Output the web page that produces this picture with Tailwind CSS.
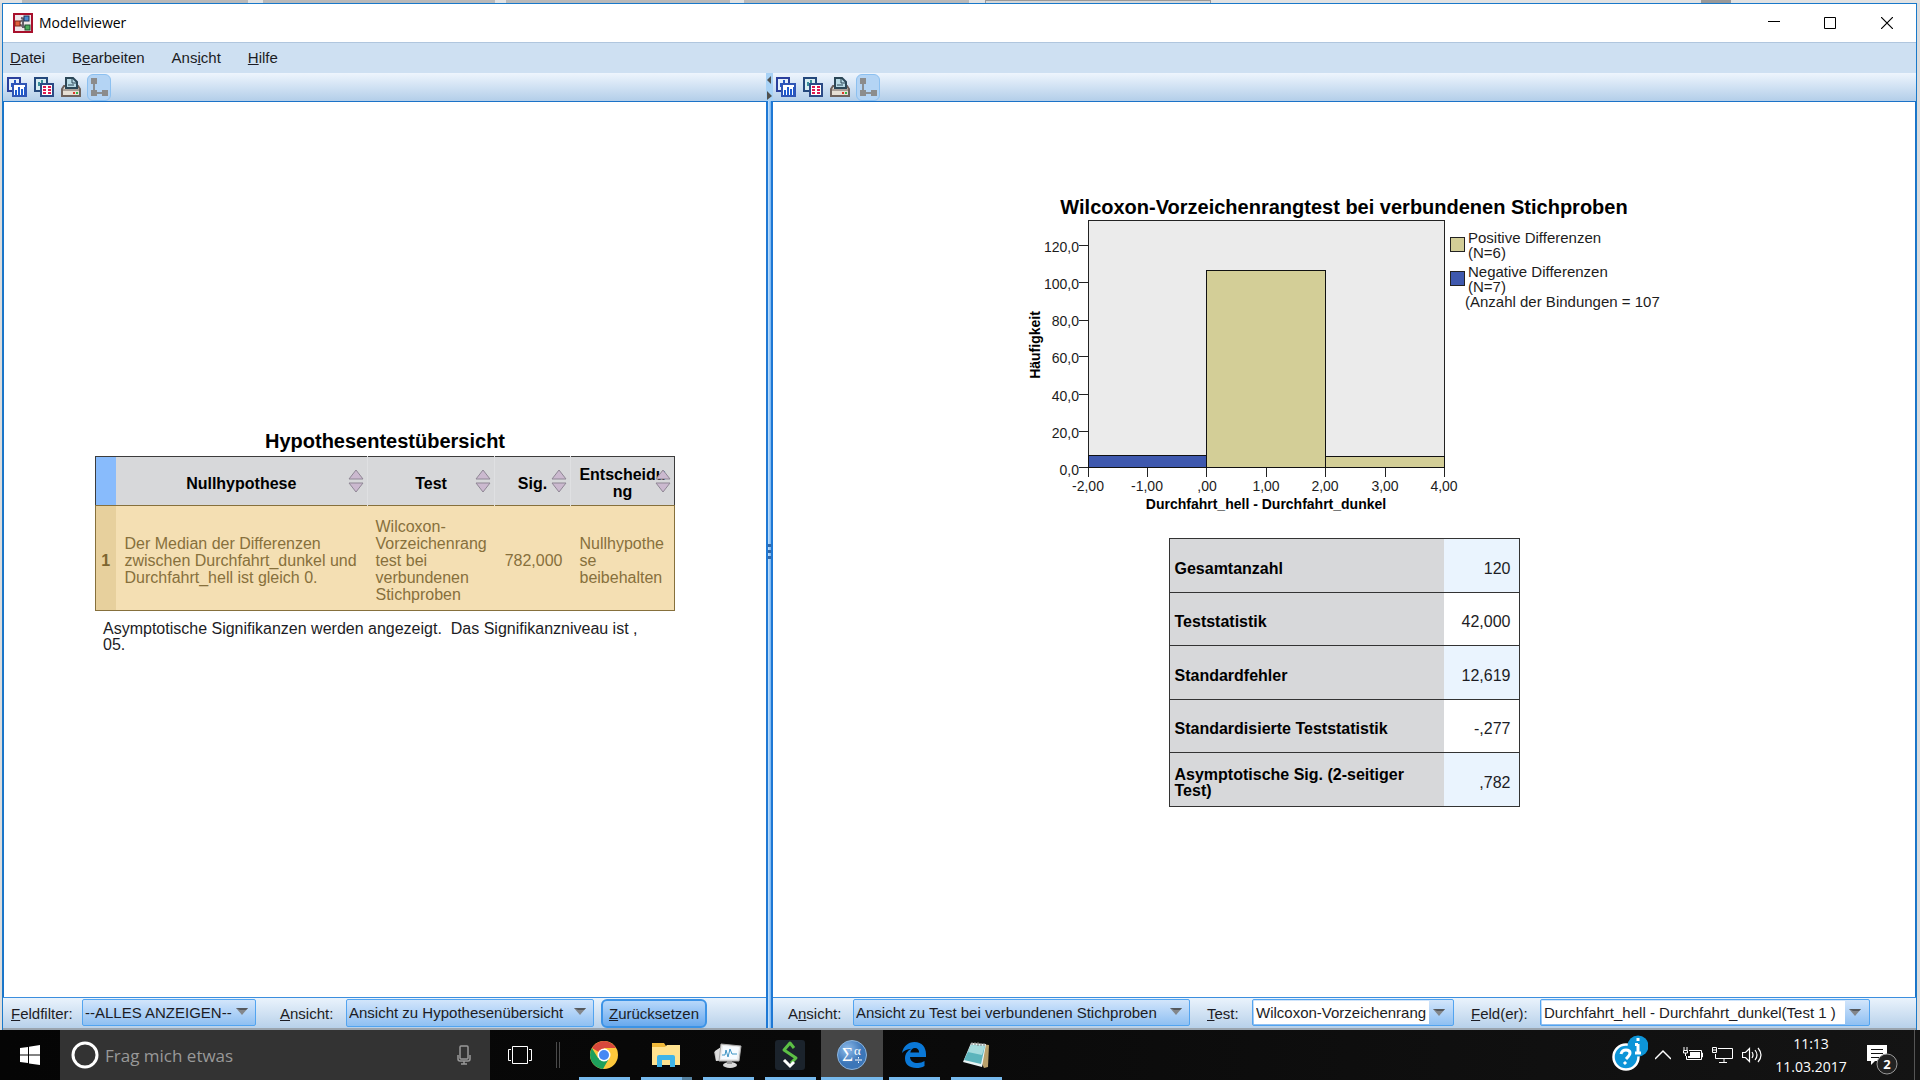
<!DOCTYPE html>
<html lang="de">

<head>
    <meta charset="UTF-8">
    <meta name="viewport" content="width=device-width, initial-scale=1.0">
    <title>Modellviewer</title>
    <script src="https://cdn.jsdelivr.net/npm/@tailwindcss/browser@4"></script>
</head>

<body class="bg-[#dcdcdc] text-[#1c1c24] font-['Liberation_Sans',Arial,sans-serif] overflow-hidden">
    <!-- Shared icons -->
    <svg class="hidden">
        <symbol id="iconCharts" viewBox="0 0 20 20">
            <rect x="1" y="1" width="12" height="13" fill="#e4f0fb" stroke="#2a3f9c" stroke-width="2" />
            <path d="M4 10V6h2v4zM7 8V3h2v5z" fill="#2457c8" />
            <rect x="6" y="7" width="13" height="12" fill="#fff" stroke="#2f55b5" stroke-width="2" />
            <path d="M8 18v-5h2v5zM11 18v-8h2v8zM14 18v-6h2v6zM17 18v-8h1v8z" fill="#1f5bd0" />
        </symbol>
        <symbol id="iconTable" viewBox="0 0 20 20">
            <rect x="1" y="1" width="12" height="13" fill="#d8eef2" stroke="#24487c" stroke-width="2" />
            <path d="M4 9V5h2v4zM7 6V3h2v3z" fill="#3c8f9c" />
            <rect x="7" y="7" width="12" height="12" fill="#fff" stroke="#2c4a86" stroke-width="2" />
            <path d="M9 10h3M14 10h3M9 13h3M14 13h3M9 16h3M14 16h3" stroke="#e01850" stroke-width="2" />
        </symbol>
        <symbol id="iconPrint" viewBox="0 0 20 20">
            <path d="M1 12l2-3h14l2 3v7H1z" fill="#e6dfd4" stroke="#6e625c" stroke-width="2" />
            <path d="M2 13h16" stroke="#6e625c" />
            <path d="M5 11V1h7l4 4v6z" fill="#b9dbe6" stroke="#2c4757" stroke-width="2" />
            <path d="M11 1v5h5M7 8h6" fill="none" stroke="#2c4757" />
            <path d="M12 16h2" stroke="#e03828" stroke-width="2" />
            <path d="M15 16h2" stroke="#35b548" stroke-width="2" />
        </symbol>
        <symbol id="iconTree" viewBox="0 0 20 20">
            <path d="M5 4v12h12" fill="none" stroke="#8a8f94" stroke-width="2" />
            <path d="M2 1h6v6H2zM2 13h6v6H2zM13 13h6v6h-6z" fill="#8c8c8c" />
        </symbol>
        <symbol id="iconSort" viewBox="0 0 16 24">
            <path d="M1 10L8 1l7 9zM1 14h14l-7 9z" fill="#cbb9cf" stroke="#8f8795" />
        </symbol>
        <symbol id="iconDrop" viewBox="0 0 12 7">
            <path d="M0 0h12L6 7z" fill="#83868a" />
            <path d="M0 0h12l-2 2H4z" fill="#55585c" />
        </symbol>
    </svg>

    <div class="flex flex-col h-screen">
        <!-- Tabs of the window behind -->
        <div class="h-[3px] shrink-0 flex bg-[#e2e2e2]">
            <div class="w-[226px] ml-[22px] bg-[#b9b9b9]"></div>
            <div class="w-[232px] ml-[15px] bg-[#b9b9b9]"></div>
            <div class="w-[224px] ml-[11px] bg-[#b9b9b9]"></div>
            <div class="w-[225px] ml-[14px] bg-[#b9b9b9]"></div>
            <div class="w-[226px] ml-[16px] border-t border-x border-[#999] bg-[#d6d6d6]"></div>
            <div class="w-[30px] ml-[490px] bg-[#999]"></div>
        </div>

        <div class="flex-1 min-h-0 flex flex-col ml-[2px] mr-[3px] border border-b-0 border-[#1979ca]">
            <header class="h-[38px] shrink-0 bg-white flex items-center justify-between">
                <div class="flex items-center gap-[6px] pl-[10px] pb-px">
                    <svg class="w-5 h-5" viewBox="0 0 20 20">
                        <rect x="1" y="1" width="18" height="18" fill="#efe6ea" stroke="#a8102c" stroke-width="2" />
                        <path d="M5 10l8-5M5 11l9 4M8 5l5 1M10 7v8" stroke="#66606a" stroke-width="2" />
                        <rect x="2" y="8" width="5" height="5" fill="#e0603c" stroke="#7c2a18" />
                        <rect x="11" y="3" width="5" height="5" fill="#4a8ad0" stroke="#1c3050" />
                        <rect x="12" y="12" width="5" height="5" fill="#4cac5c" stroke="#1f5030" />
                    </svg>
                    <h1 class="text-[14px] text-black font-['Open_Sans',sans-serif]">Modellviewer</h1>
                </div>
                <div class="flex h-full">
                    <button aria-label="Minimieren" class="w-14 flex items-center justify-center">
                        <svg class="w-3 h-3" viewBox="0 0 12 12"><path d="M0 4.500h12" stroke="#000" /></svg>
                    </button>
                    <button aria-label="Maximieren" class="w-14 flex items-center justify-center pb-px">
                        <svg class="w-3 h-3" viewBox="0 0 12 12"><path d="M.5.5h11v11H.5z" fill="none" stroke="#000" /></svg>
                    </button>
                    <button aria-label="Schließen" class="w-[58px] flex items-center justify-center pb-px">
                        <svg class="w-3 h-3" viewBox="0 0 12 12"><path d="M0 0l12 12M12 0L0 12" stroke="#000" stroke-width="1.2" /></svg>
                    </button>
                </div>
            </header>

            <nav class="h-[31px] shrink-0 bg-[#cee0f2] border-t border-[#b0c6de] flex items-center gap-[27px] pl-[7px] text-[15px]">
                <button><u>D</u>atei</button>
                <button>B<u>e</u>arbeiten</button>
                <button>Ans<u>i</u>cht</button>
                <button><u>H</u>ilfe</button>
            </nav>

            <div class="flex-1 min-h-0 flex">
                <!-- Hypothesenübersicht -->
                <section class="w-[763px] shrink-0 flex flex-col">
                    <div class="h-7 shrink-0 flex items-center gap-[7px] pl-1 bg-linear-to-b from-[#eef5fd] to-[#b3cee9]">
                        <button aria-label="Diagramme" class="w-5 h-5"><svg class="w-5 h-5"><use href="#iconCharts" /></svg></button>
                        <button aria-label="Tabelle" class="w-5 h-5"><svg class="w-5 h-5"><use href="#iconTable" /></svg></button>
                        <button aria-label="Drucken" class="w-5 h-5"><svg class="w-5 h-5"><use href="#iconPrint" /></svg></button>
                        <button aria-label="Baum" class="-ml-px w-6 h-[27px] flex items-center justify-center rounded-md border border-[#8cc0f0] bg-[#b4d4f4]"><svg class="w-5 h-5"><use href="#iconTree" /></svg></button>
                    </div>

                    <div class="flex-1 bg-white border-t border-l border-[#1b72c8] flex flex-col items-center pt-[324px]">
                        <h2 class="text-[20px] leading-[30px] font-bold text-black">Hypothesentestübersicht</h2>
                        <table class="w-[580px] table-fixed border-collapse border border-[#3c3c3c] text-[16px] leading-[17px]">
                            <colgroup>
                                <col class="w-[20px]">
                                <col class="w-[252px]">
                                <col class="w-[127px]">
                                <col class="w-[76px]">
                                <col>
                            </colgroup>
                            <thead>
                                <tr class="h-[49px] bg-[#d7d8da] text-black">
                                    <th class="bg-[#88bbfc]"></th>
                                    <th class="relative pt-1">Nullhypothese<svg class="absolute right-[3px] top-3 w-4 h-6"><use href="#iconSort" /></svg></th>
                                    <th class="relative pt-1 border-l border-[#dfe0e2]">Test<svg class="absolute right-[3px] top-3 w-4 h-6"><use href="#iconSort" /></svg></th>
                                    <th class="relative pt-1 border-l border-[#dfe0e2]">Sig.<svg class="absolute right-[3px] top-3 w-4 h-6"><use href="#iconSort" /></svg></th>
                                    <th class="relative pt-1 border-l border-[#dfe0e2]">Entscheidu<br>ng<svg class="absolute right-[3px] top-3 w-4 h-6"><use href="#iconSort" /></svg></th>
                                </tr>
                            </thead>
                            <tbody>
                                <tr class="h-[105px] bg-[#f4dfb3] text-[#87703c] border border-[#86703c]">
                                    <th class="bg-[#e7d09d] text-[#7d6530] pt-1">1</th>
                                    <td class="pl-[9px] pt-1">Der Median der Differenzen<br>zwischen Durchfahrt_dunkel und<br>Durchfahrt_hell ist gleich 0.</td>
                                    <td class="pl-2 pt-1">Wilcoxon-<br>Vorzeichenrang<br>test bei<br>verbundenen<br>Stichproben</td>
                                    <td class="pr-2 pt-1 text-right">782,000</td>
                                    <td class="pl-[9px] pt-1">Nullhypothe<br>se<br>beibehalten</td>
                                </tr>
                            </tbody>
                        </table>
                        <p class="w-[564px] mt-[10px] text-[16px] leading-[16px]">Asymptotische Signifikanzen werden angezeigt.&nbsp; Das Signifikanzniveau ist ,<br>05.</p>
                    </div>

                    <div class="h-[31px] shrink-0 flex items-start pt-px pl-2 text-[15px] border-t border-[#3b8ede] bg-linear-to-b from-[#eaf3fc] to-[#b8d1ea]">
                        <label for="feldfilter" class="leading-[30px] w-[71px]"><u>F</u>eldfilter:</label>
                        <div class="relative w-[174px]">
                            <select id="feldfilter" class="appearance-none w-full h-[27px] pl-[2px] pt-px border border-[#52a4f0] rounded-xs bg-linear-to-b from-[#d2e5fb] to-[#8fc0f2]"><option>--ALLES ANZEIGEN--</option></select>
                            <svg class="absolute right-2 top-[9px] w-3 h-[7px] pointer-events-none"><use href="#iconDrop" /></svg>
                        </div>
                        <label for="ansichtLinks" class="leading-[30px] ml-6 w-[66px]"><u>A</u>nsicht:</label>
                        <div class="relative w-[248px]">
                            <select id="ansichtLinks" class="appearance-none w-full h-[28px] pl-[2px] pt-px border border-[#52a4f0] rounded-xs bg-linear-to-b from-[#d2e5fb] to-[#8fc0f2]"><option>Ansicht zu Hypothesenübersicht</option></select>
                            <svg class="absolute right-2 top-[9px] w-3 h-[7px] pointer-events-none"><use href="#iconDrop" /></svg>
                        </div>
                        <button class="ml-[7px] w-[106px] h-[29px] pt-px rounded-md border-2 border-[#3c93e6] bg-linear-to-b from-[#b8d8fa] to-[#68a9ee]"><u>Z</u>urücksetzen</button>
                    </div>
                </section>

                <!-- Teiler -->
                <div class="w-[7px] shrink-0 flex flex-col">
                    <div class="h-7 bg-[#a8d2f6]">
                        <svg class="w-[6px] h-7" viewBox="0 0 6 28"><path d="M5 3v8L1 7zM1 18l5 5-5 4z" fill="#50504e" /></svg>
                    </div>
                    <div class="flex-1 flex items-center pb-7 border-x-2 border-[#1e78d4] bg-linear-to-r from-[#c8e4fc] to-[#74b2f0]">
                        <svg class="w-[3px] h-5" viewBox="0 0 3 20"><path d="M0 3h3v3H0zM0 9h3v3H0zM0 15h3v3H0z" fill="#3468a8" /></svg>
                    </div>
                </div>

                <!-- Testansicht -->
                <section class="flex-1 min-w-0 flex flex-col">
                    <div class="h-7 shrink-0 flex items-center gap-[7px] pl-[3px] bg-linear-to-b from-[#eef5fd] to-[#b3cee9]">
                        <button aria-label="Diagramme" class="w-5 h-5"><svg class="w-5 h-5"><use href="#iconCharts" /></svg></button>
                        <button aria-label="Tabelle" class="w-5 h-5"><svg class="w-5 h-5"><use href="#iconTable" /></svg></button>
                        <button aria-label="Drucken" class="w-5 h-5"><svg class="w-5 h-5"><use href="#iconPrint" /></svg></button>
                        <button aria-label="Baum" class="-ml-px w-6 h-[27px] flex items-center justify-center rounded-md border border-[#8cc0f0] bg-[#b4d4f4]"><svg class="w-5 h-5"><use href="#iconTree" /></svg></button>
                    </div>

                    <div class="flex-1 bg-white border-t border-r border-[#1b72c8] flex flex-col items-center pt-[92px]">
                        <h2 class="text-[20px] leading-[26px] font-bold text-black">Wilcoxon-Vorzeichenrangtest bei verbundenen Stichproben</h2>
                        <svg class="w-[640px] h-[300px]" viewBox="0 0 640 300" font-size="14" fill="#1c1c1c">
                            <rect x="64.5" y=".5" width="356" height="247" fill="#ebebeb" stroke="#222" />
                            <rect x="64.5" y="235.5" width="118" height="12" fill="#3e58ae" stroke="#111" />
                            <rect x="182.5" y="50.5" width="119" height="197" fill="#d3ce97" stroke="#111" />
                            <rect x="301.5" y="236.5" width="119" height="11" fill="#d3ce97" stroke="#111" />
                            <path d="M55 25.5h9M55 62.5h9M55 100.5h9M55 136.5h9M55 174.5h9M55 211.5h9M55 247.5h9M64.5 248v9M123.5 248v9M182.5 248v9M242.5 248v9M301.5 248v9M361.5 248v9M420.5 248v9" stroke="#222" />
                            <g text-anchor="end">
                                <text x="55" y="32">120,0</text>
                                <text x="55" y="69">100,0</text>
                                <text x="55" y="106">80,0</text>
                                <text x="55" y="143">60,0</text>
                                <text x="55" y="181">40,0</text>
                                <text x="55" y="218">20,0</text>
                                <text x="55" y="255">0,0</text>
                            </g>
                            <g text-anchor="middle">
                                <text x="64" y="271">-2,00</text>
                                <text x="123" y="271">-1,00</text>
                                <text x="183" y="271">,00</text>
                                <text x="242" y="271">1,00</text>
                                <text x="301" y="271">2,00</text>
                                <text x="361" y="271">3,00</text>
                                <text x="420" y="271">4,00</text>
                                <g font-weight="bold" fill="#000">
                                    <text x="242" y="289">Durchfahrt_hell - Durchfahrt_dunkel</text>
                                    <text transform="translate(16 125) rotate(-90)">Häufigkeit</text>
                                </g>
                            </g>
                            <rect x="426.5" y="17.5" width="14" height="14" fill="#d3ce97" stroke="#222" />
                            <rect x="426.5" y="51.5" width="14" height="14" fill="#3e58ae" stroke="#222" />
                            <g font-size="15">
                                <text x="444" y="23">Positive Differenzen</text>
                                <text x="444" y="38">(N=6)</text>
                                <text x="444" y="57">Negative Differenzen</text>
                                <text x="444" y="72">(N=7)</text>
                                <text x="441" y="87">(Anzahl der Bindungen = 107</text>
                            </g>
                        </svg>

                        <table class="w-[351px] mt-[18px] table-fixed border-collapse border border-[#333] text-[16px] leading-[16px]">
                            <colgroup>
                                <col>
                                <col class="w-[75px]">
                            </colgroup>
                            <tbody>
                                <tr class="h-[54px] border border-[#333]">
                                    <th class="pl-[5px] pt-[6px] text-left bg-[#d7d8da] text-black">Gesamtanzahl</th>
                                    <td class="pr-2 pt-[6px] text-right bg-[#eaf4fe]">120</td>
                                </tr>
                                <tr class="h-[53px] border border-[#333]">
                                    <th class="pl-[5px] pt-[6px] text-left bg-[#d7d8da] text-black">Teststatistik</th>
                                    <td class="pr-2 pt-[6px] text-right">42,000</td>
                                </tr>
                                <tr class="h-[54px] border border-[#333]">
                                    <th class="pl-[5px] pt-[6px] text-left bg-[#d7d8da] text-black">Standardfehler</th>
                                    <td class="pr-2 pt-[6px] text-right bg-[#eaf4fe]">12,619</td>
                                </tr>
                                <tr class="h-[53px] border border-[#333]">
                                    <th class="pl-[5px] pt-[6px] text-left bg-[#d7d8da] text-black">Standardisierte Teststatistik</th>
                                    <td class="pr-2 pt-[6px] text-right">-,277</td>
                                </tr>
                                <tr class="h-[54px] border border-[#333]">
                                    <th class="pl-[5px] pt-[6px] text-left bg-[#d7d8da] text-black">Asymptotische Sig. (2-seitiger<br>Test)</th>
                                    <td class="pr-2 pt-[6px] text-right bg-[#eaf4fe]">,782</td>
                                </tr>
                            </tbody>
                        </table>
                    </div>

                    <div class="h-[31px] shrink-0 flex items-start pt-px pl-[15px] text-[15px] border-t border-[#3b8ede] bg-linear-to-b from-[#eaf3fc] to-[#b8d1ea]">
                        <label for="ansichtRechts" class="leading-[30px] w-[65px]">A<u>n</u>sicht:</label>
                        <div class="relative w-[337px]">
                            <select id="ansichtRechts" class="appearance-none w-full h-[27px] pl-[2px] pt-px border border-[#52a4f0] rounded-xs bg-linear-to-b from-[#d2e5fb] to-[#8fc0f2]"><option>Ansicht zu Test bei verbundenen Stichproben</option></select>
                            <svg class="absolute right-2 top-[9px] w-3 h-[7px] pointer-events-none"><use href="#iconDrop" /></svg>
                        </div>
                        <label for="test" class="leading-[30px] ml-[17px] w-[45px]"><u>T</u>est:</label>
                        <div class="relative w-[202px] flex h-[27px] p-px border border-[#52a4f0] rounded-xs bg-linear-to-b from-[#d2e5fb] to-[#8fc0f2]">
                            <select id="test" class="appearance-none w-[175px] h-[23px] pl-[2px] pt-px bg-white"><option>Wilcoxon-Vorzeichenrang</option></select>
                            <svg class="absolute right-2 top-[9px] w-3 h-[7px] pointer-events-none"><use href="#iconDrop" /></svg>
                        </div>
                        <label for="felder" class="leading-[30px] ml-[17px] w-[69px]"><u>F</u>eld(er):</label>
                        <div class="relative w-[330px] flex h-[27px] p-px border border-[#52a4f0] rounded-xs bg-linear-to-b from-[#d2e5fb] to-[#8fc0f2]">
                            <select id="felder" class="appearance-none w-[303px] h-[23px] pl-[2px] pt-px bg-white"><option>Durchfahrt_hell - Durchfahrt_dunkel(Test 1 )</option></select>
                            <svg class="absolute right-2 top-[9px] w-3 h-[7px] pointer-events-none"><use href="#iconDrop" /></svg>
                        </div>
                    </div>
                </section>
            </div>
            <div class="h-[2px] shrink-0 bg-[#9aa4ae]"></div>
        </div>

        <!-- Taskleiste -->
        <footer class="h-[50px] shrink-0 flex bg-linear-to-r from-[#050505] via-[#0a0a0a] to-[#141414] text-white font-['Open_Sans',sans-serif]">
            <button aria-label="Start" class="w-[60px] flex items-center justify-center">
                <svg class="w-5 h-5" viewBox="0 0 20 20"><path d="M0 3l8-1v7.500H0zM9 1.800L20 0v9.500H9zM0 10.500h8V18l-8-1zM9 10.500h11V20L9 18.400z" fill="#fff" /></svg>
            </button>
            <div class="w-[430px] flex items-center bg-[#333] pl-[11px] pr-[19px]">
                <svg class="w-7 h-7 shrink-0" viewBox="0 0 28 28"><circle cx="14" cy="14" r="12" fill="none" stroke="#fff" stroke-width="3" /></svg>
                <input type="text" aria-label="Suche" placeholder="Frag mich etwas" class="flex-1 min-w-0 ml-[6px] pt-[2px] text-[17px] bg-transparent placeholder-[#999]">
                <svg class="w-[14px] h-5" viewBox="0 0 14 20" fill="none" stroke="#999" stroke-width="1.500"><rect x="3" y="1" width="8" height="13" rx="1" /><path d="M1 10v4q0 2 2 2h8q2 0 2-2v-4M7 16v3M4 19h6" /></svg>
            </div>
            <button aria-label="Taskansicht" class="w-[60px] flex items-center justify-center">
                <svg class="w-6 h-[18px]" viewBox="0 0 24 18" fill="none" stroke="#fff"><path d="M4.500.5h15v17h-15zM3 3.500H.5v11H3M21 3.500h2.500v11H21" /></svg>
            </button>
            <div class="w-[4px] h-[26px] ml-[6px] mr-[13px] mt-3 border-x border-[#4a4a4a]"></div>

            <button aria-label="Chrome" class="w-[62px] flex flex-col items-center justify-between">
                <svg class="w-7 h-7 mt-[11px]" viewBox="0 0 28 28">
                    <circle cx="14" cy="14" r="14" fill="#fdc83c" />
                    <path d="M14 14L1.900 7A14 14 0 0 1 26.100 7H14z" fill="#d8483c" />
                    <path d="M1.900 7A14 14 0 0 0 13 28l6-10.500L8 17z" fill="#1ea05c" />
                    <circle cx="14" cy="14" r="6.500" fill="#fff" />
                    <circle cx="14" cy="14" r="5" fill="#4688f4" />
                </svg>
                <span class="w-[51px] h-[3px] bg-[#76b9ed]"></span>
            </button>
            <button aria-label="Explorer" class="w-[62px] flex flex-col items-center justify-between">
                <svg class="w-7 h-6 mt-[13px]" viewBox="0 0 28 24">
                    <path d="M0 0h12l2 3h14v19H0z" fill="#f0b93a" />
                    <path d="M0 4h13l2-2h13v20H0z" fill="#ffe28f" />
                    <path d="M5 24V14q0-2 2-2h14q2 0 2 2v10h-5v-7h-8v7z" fill="#3fb4e8" />
                </svg>
                <span class="flex w-[51px] h-[3px]"><i class="w-[41px] bg-[#76b9ed]"></i><i class="w-[10px] bg-[#54809f]"></i></span>
            </button>
            <button aria-label="Leistungsmonitor" class="w-[62px] flex flex-col items-center justify-between">
                <svg class="w-7 h-[25px] mt-[13px]" viewBox="0 0 28 25">
                    <path d="M0 9l8-5v14H2z" fill="#a9a9a9" />
                    <path d="M1 8l6-4 1 12-6 2z" fill="#ddd" />
                    <path d="M7 1l20 2-2 15H5z" fill="#e9e9e9" stroke="#aaa" />
                    <path d="M9 3l16 1-2 12H7z" fill="#f6fbff" />
                    <path d="M8 12h3l1-5 2 7 2-8 2 5h5" fill="none" stroke="#3d94c4" />
                    <ellipse cx="16" cy="22" rx="7" ry="3" fill="#dadada" />
                    <path d="M13 18h5v3h-5z" fill="#999" />
                </svg>
                <span class="w-[51px] h-[3px] bg-[#76b9ed]"></span>
            </button>
            <button aria-label="Aufgaben" class="w-[62px] flex flex-col items-center justify-between">
                <svg class="w-[30px] h-[30px] mt-[10px]" viewBox="0 0 30 30" fill="none" stroke-width="3">
                    <rect width="30" height="30" rx="3" fill="#1b232c" />
                    <path d="M19 8l-4-5-6 7 12 8-5 5" stroke="#5cc045" stroke-linejoin="round" />
                    <path d="M9 20l6 6 4-4" stroke="#fff" />
                </svg>
                <span class="w-[51px] h-[3px] bg-[#76b9ed]"></span>
            </button>
            <button aria-label="SPSS Statistics" class="w-[62px] flex flex-col items-center justify-between bg-[#454545]">
                <svg class="w-[30px] h-[30px] mt-[10px]" viewBox="0 0 30 30">
                    <defs><radialGradient id="spss" cx=".35" cy=".3"><stop offset="0" stop-color="#8fbcea" /><stop offset="1" stop-color="#3c76b8" /></radialGradient></defs>
                    <circle cx="15" cy="15" r="14.500" fill="url(#spss)" stroke="#8cb4dc" />
                    <g fill="#fff" font-family="Liberation Serif, serif"><text x="5" y="21" font-size="19">Σ</text><text x="17" y="15" font-size="13">α</text></g>
                    <path d="M18 20h7M21.500 17v1.500M21.500 21.500V23" stroke="#fff" />
                </svg>
                <span class="w-full h-[3px] bg-[#76b9ed]"></span>
            </button>
            <button aria-label="Edge" class="w-[62px] flex flex-col items-center justify-between">
                <svg class="w-6 h-[26px] mt-3" viewBox="0 0 24 26"><path d="M0 11C1.500 4 6 0 12.500 0 20 0 24 5.500 24 12v3H8c.3 4 3.500 6 7.500 6 2.800 0 5-.7 7-2v5c-2.300 1.400-5 2-8 2C7.500 26 3 22.500 3 16.500 3 12 5.500 8.500 9.500 6.800 5.500 7 2 8.500 0 11zM8.300 10.500h8.800C17 7.500 15.500 6 13 6 10.500 6 8.800 8 8.300 10.500z" fill="#0a78d7" /></svg>
                <span class="w-[51px] h-[3px] bg-[#76b9ed]"></span>
            </button>
            <button aria-label="Editor" class="w-[62px] flex flex-col items-center justify-between">
                <svg class="w-7 h-7 mt-[11px]" viewBox="0 0 28 28">
                    <path d="M10 2l17 2-1 22-4 1z" fill="#b9a06a" />
                    <path d="M9 2l15 1-4 23L1 21z" fill="#e9f4f4" />
                    <path d="M9 4l14 1-4 18L2 19z" fill="#5cb4bc" />
                    <path d="M9 4l14 1-3 9L6 11z" fill="#a5dbdd" />
                    <path d="M10 1v3M13 1v3M16 1v4M19 2v3M22 2v3" stroke="#777" />
                </svg>
                <span class="w-[51px] h-[3px] bg-[#76b9ed]"></span>
            </button>

            <!-- Infobereich -->
            <div class="ml-auto flex items-center">
                <svg class="w-9 h-9 mb-1" viewBox="0 0 36 36">
                    <circle cx="14" cy="22" r="12.500" fill="#0d95d8" stroke="#fff" stroke-width="2.500" />
                    <circle cx="26" cy="11" r="10.500" fill="#0d95d8" />
                    <g fill="none" stroke="#fff" stroke-width="3"><path d="M9 19q1-4 5-4t4 3q0 2-4 6M12 27l2 2M26 9v10M26 3v3M23 9.500h3M23 18h6" /></g>
                </svg>
                <svg class="w-4 h-4 ml-[7px]" viewBox="0 0 16 16"><path d="M0 12l8-8 8 8" fill="none" stroke="#fff" stroke-width="1.500" /></svg>
                <svg class="w-5 h-4 ml-3" viewBox="0 0 20 16"><path d="M6 3.500h12.500v9H3.500V9M18.500 6h1v4h-1M1 0v3M4 0v3M.5 3.500h4V6h-4zM2.500 6v3" fill="none" stroke="#fff" /><path d="M7 5h10v6H5V9h2z" fill="#fff" /></svg>
                <svg class="w-[21px] h-4 ml-[9px]" viewBox="0 0 21 16"><path d="M6 1.500h14.500v10H3.500V7M12 12v3M7 15.500h8M.5.500h4v5h-4zM.5 3h4" fill="none" stroke="#fff" /></svg>
                <svg class="w-[21px] h-[18px] ml-[9px]" viewBox="0 0 21 18"><path d="M.5 6.500h3l4-4v13l-4-4h-3zM10 6q2 3 0 6M13 4q4 5 0 10M16 2q6 7 0 14" fill="none" stroke="#fff" stroke-width="1.200" /></svg>
                <div class="w-[96px] text-center text-[14px] leading-[23px]">11:13<br>11.03.2017</div>
                <button aria-label="Benachrichtigungen" class="ml-2 w-[47px] h-8 mt-[10px]">
                    <svg class="w-8 h-8" viewBox="0 0 32 32">
                        <path d="M0 1h20v16H8l-4 4v-4H0z" fill="#fff" />
                        <path d="M4 5.500h12M4 9.500h12M4 13.500h8" stroke="#111" />
                        <circle cx="20" cy="20" r="10" fill="#222" stroke="#999" />
                        <text x="20" y="25" text-anchor="middle" font-size="13" font-weight="bold" fill="#fff">2</text>
                    </svg>
                </button>
                <div class="h-full w-[6px] border-l border-[#555]"></div>
            </div>
        </footer>
    </div>
</body>

</html>
